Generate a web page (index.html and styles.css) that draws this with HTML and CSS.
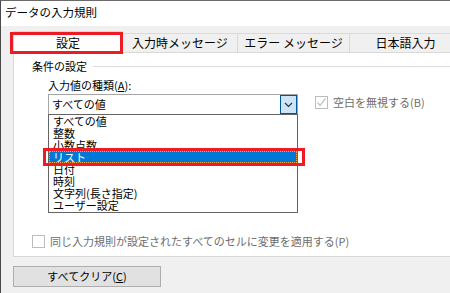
FILE: index.html
```html
<!DOCTYPE html>
<html lang="ja">
<head>
<meta charset="utf-8">
<link rel="stylesheet" href="styles.css">
</head>
<body>
<div class="window">
  <div class="titlebar">データの入力規則</div>
  <div class="main">
    <div class="tabs">
      <div class="tab tab-active">設定</div>
      <div class="tab tab-2">入力時メッセージ</div>
      <div class="tab tab-3">エラー メッセージ</div>
      <div class="tab tab-4">日本語入力</div>
    </div>
    <div class="panel">
      <div class="group-head"><span class="group-label">条件の設定</span><span class="group-line"></span></div>
      <div class="field-label">入力値の種類(<u>A</u>):</div>
      <div class="field-row">
        <div class="field-col">
          <div class="combo">
            <span class="combo-text">すべての値</span>
            <span class="combo-btn"><svg width="9" height="6" viewBox="0 0 9 6"><polyline points="1,1 4.5,4.5 8,1" fill="none" stroke="#2b2b2b" stroke-width="1.1"/></svg></span>
          </div>
          <ul class="list">
            <li class="item">すべての値</li>
            <li class="item">整数</li>
            <li class="item">小数点数</li>
            <li class="item item-sel">リスト</li>
            <li class="item">日付</li>
            <li class="item">時刻</li>
            <li class="item">文字列(長さ指定)</li>
            <li class="item">ユーザー設定</li>
          </ul>
        </div>
        <div class="check check-right">
          <span class="box"><svg width="11" height="11" viewBox="0 0 11 11"><polyline points="1.5,5.5 4,8.5 9.5,1.5" fill="none" stroke="#c4c4c4" stroke-width="1.3"/></svg></span>
          <span class="check-text">空白を無視する(B)</span>
        </div>
      </div>
      <div class="check check-bottom">
        <span class="box"></span>
        <span class="check-text">同じ入力規則が設定されたすべてのセルに変更を適用する(P)</span>
      </div>
    </div>
    <div class="btn">すべてクリア(<u>C</u>)</div>
  </div>
  <div class="mark mark-tab"></div>
  <div class="mark mark-item"></div>
</div>
</body>
</html>
```

FILE: styles.css
```css
* { box-sizing: border-box; }
html, body { margin: 0; padding: 0; }
body {
  font-family: "Noto Sans CJK JP", "Noto Sans", sans-serif;
  font-size: 11px;
  color: #000;
  background: #f0f0f0;
}
.window {
  position: relative;
  width: 450px;
  height: 293px;
  overflow: hidden;
  border-top: 1px solid #6a6a6a;
  border-left: 1px solid #4a4a4a;
  background: #f0f0f0;
}
.titlebar {
  height: 25px;
  background: #fff;
  padding-left: 4px;
  line-height: 23px;
  font-size: 11.5px;
}
.main {
  padding: 7px 0 0 12px;
}
.tabs {
  display: flex;
  height: 19px;
  align-items: flex-start;
}
.tab {
  flex: none;
  height: 19px;
  line-height: 18px;
  font-size: 12px;
  text-align: center;
  background: #f0f0f0;
  border: 1px solid #d9d9d9;
  border-bottom: none;
  border-left: none;
}
.tab-active {
  position: relative;
  z-index: 2;
  width: 110px;
  height: 22px;
  margin-top: -2px;
  line-height: 22px;
  background: #fff;
  border-left: 1px solid #d9d9d9;
}
.tab-2 { width: 115px; }
.tab-3 { width: 112px; }
.tab-4 { width: 112px; }
.panel {
  width: 460px;
  height: 205px;
  background: #fff;
  border: 1px solid #d9d9d9;
  border-right: none;
  padding-top: 6px;
}
.group-head {
  display: flex;
  align-items: center;
  height: 14px;
  padding-left: 18px;
}
.group-label { line-height: 14px; }
.group-line {
  flex: 1;
  height: 1px;
  background: #dcdcdc;
  margin-left: 6px;
}
.field-label {
  margin: 5px 0 0 34px;
  height: 15px;
  line-height: 15px;
}
.field-label u, .btn u { text-decoration: underline; text-underline-offset: 1px; }
.field-row {
  display: flex;
  align-items: flex-start;
  margin: 1px 0 0 34px;
}
.field-col {
  width: 250px;
}
.combo {
  display: flex;
  align-items: center;
  height: 21px;
  border: 1px solid #a6a6a6;
  background: #fff;
}
.combo-text {
  flex: 1;
  padding-left: 3px;
  line-height: 19px;
}
.combo-btn {
  width: 17px;
  height: 19px;
  background: #cce4f7;
  border: 1px solid #005499;
  display: flex;
  align-items: center;
  justify-content: center;
}
.list {
  list-style: none;
  margin: -1px 0 0;
  padding: 0;
  height: 99px;
  border: 1px solid #646464;
  background: #fff;
}
.item {
  height: 12px;
  line-height: 12px;
  padding-left: 4px;
  white-space: nowrap;
}
.item-sel {
  background: #0078d7;
  color: #fff;
  outline: 1px dotted #f0a84a;
  outline-offset: -1px;
}
.check {
  display: flex;
  align-items: center;
  color: #6d6d6d;
}
.box {
  width: 13px;
  height: 13px;
  border: 1px solid #bcbcbc;
  background: #fff;
  display: flex;
  align-items: center;
  justify-content: center;
  flex: none;
}
.check-text {
  margin-left: 5px;
  line-height: 14px;
  white-space: nowrap;
}
.check-right {
  margin: 1px 0 0 17px;
}
.check-bottom {
  margin: 21px 0 0 18px;
}
.btn {
  width: 148px;
  height: 21px;
  margin-top: 9px;
  background: #e1e1e1;
  border: 1px solid #adadad;
  text-align: center;
  line-height: 19px;
}
.mark {
  position: absolute;
  border: 3px solid #ed1c24;
  z-index: 5;
}
.mark-tab {
  left: 9px;
  top: 31px;
  width: 113px;
  height: 22px;
}
.mark-item {
  left: 42px;
  top: 147px;
  width: 262px;
  height: 18px;
}
```
